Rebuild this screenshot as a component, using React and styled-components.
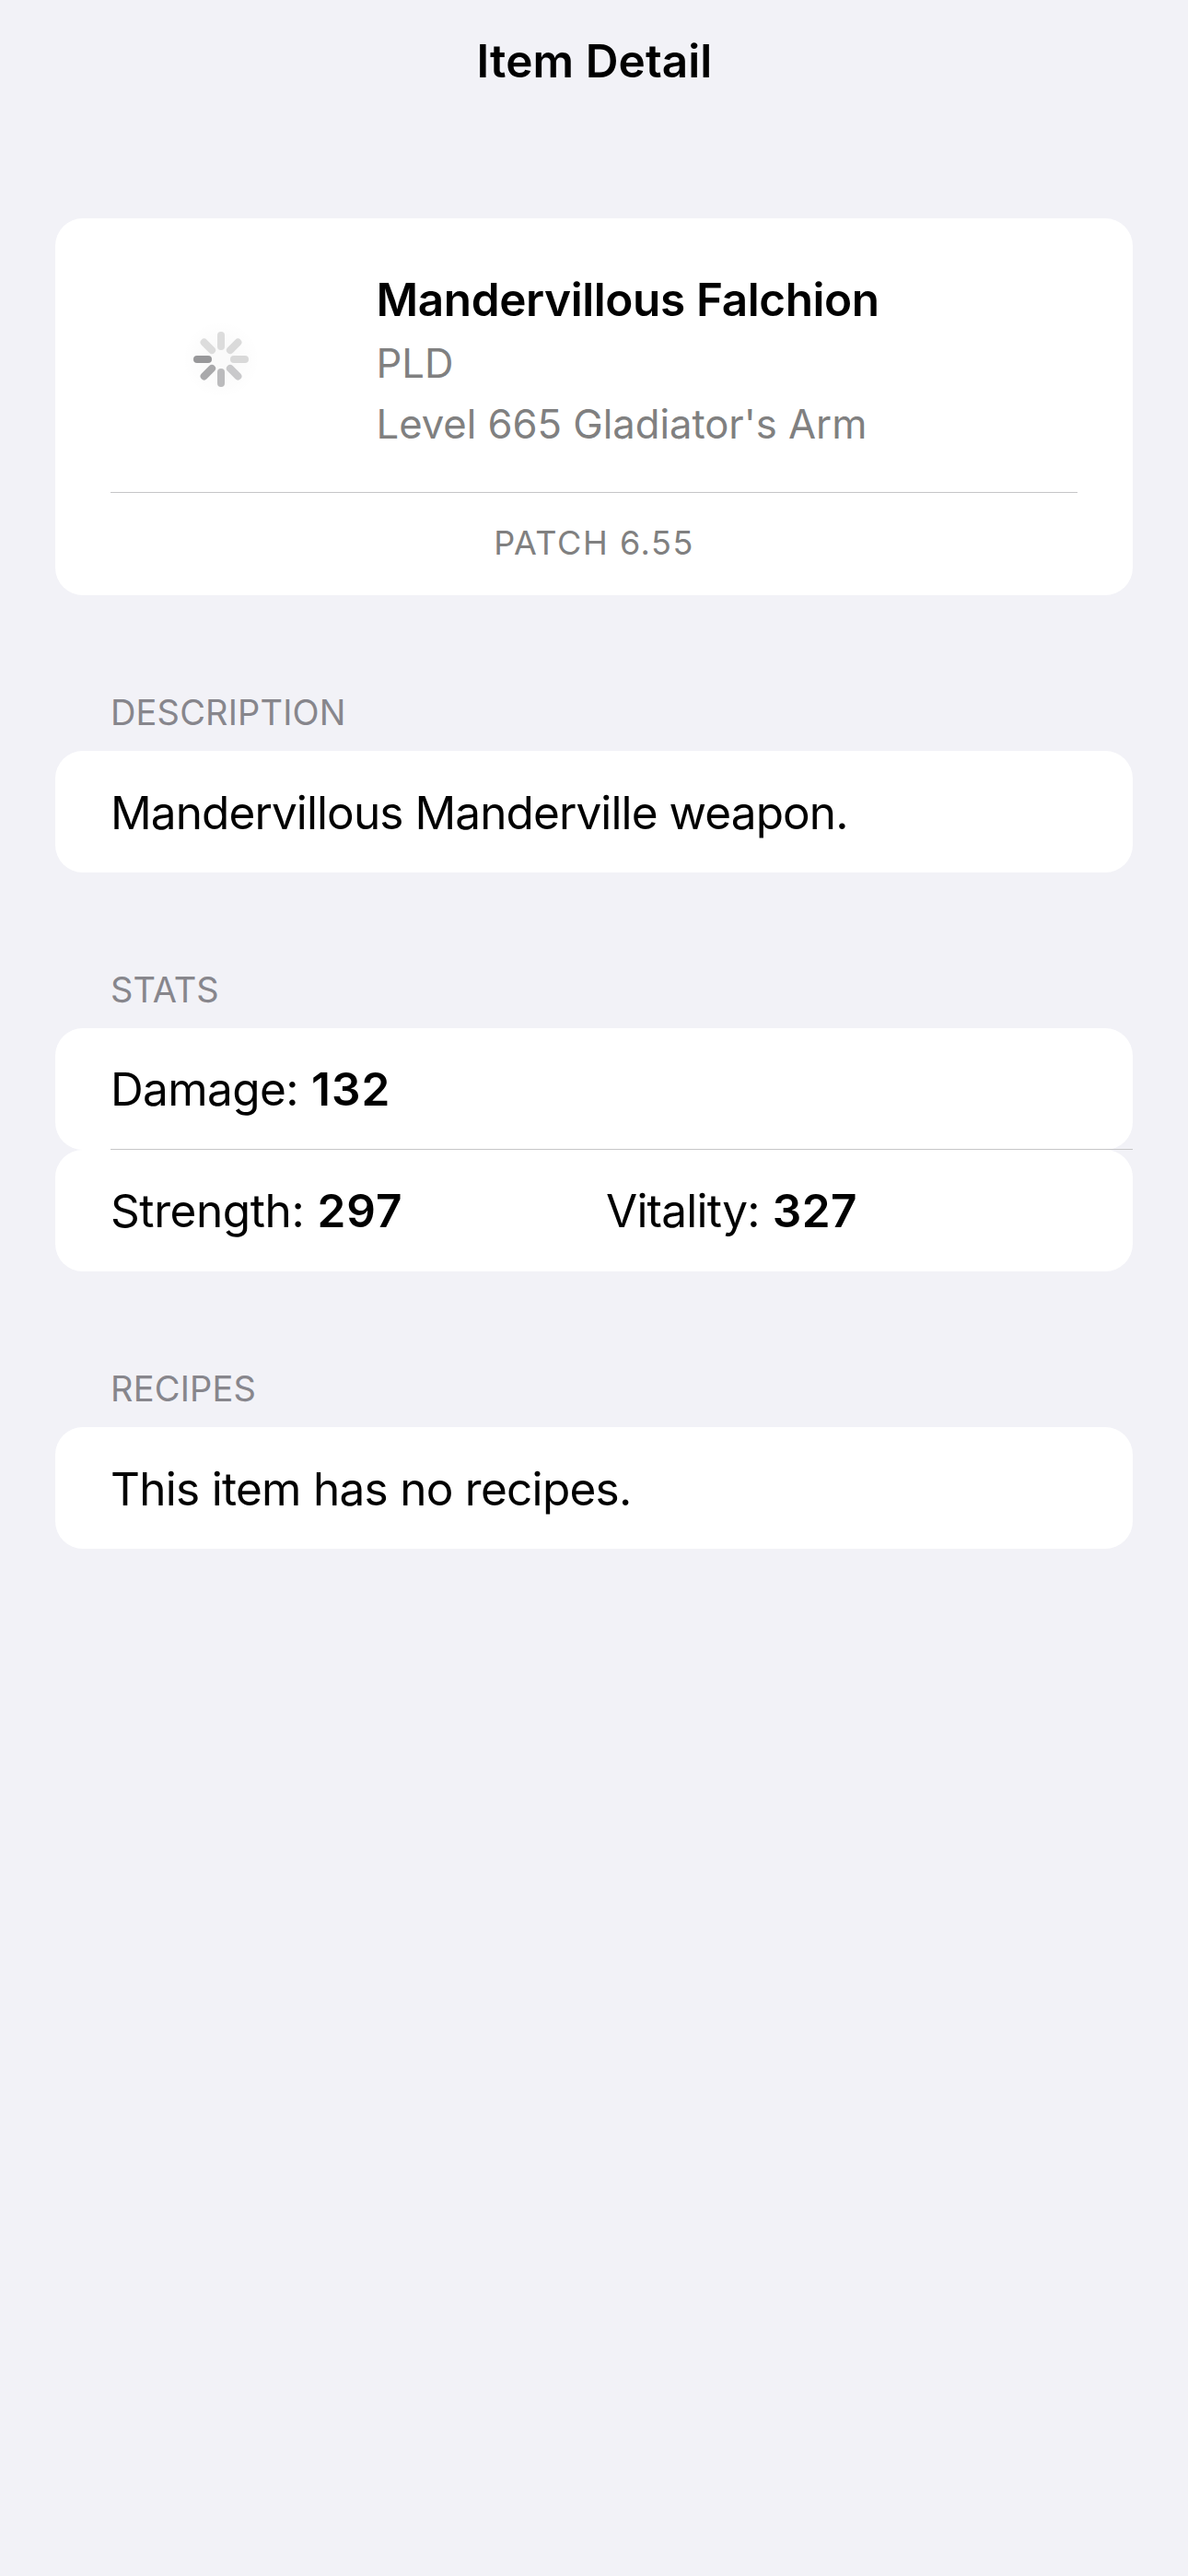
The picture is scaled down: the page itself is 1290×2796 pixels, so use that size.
import React from "react";
import styled, { createGlobalStyle } from "styled-components";

const GlobalStyle = createGlobalStyle`
  *, *::before, *::after {
    box-sizing: border-box;
  }
  html, body {
    margin: 0;
    background: #f2f2f7;
  }
  body {
    font-family: Inter, Roboto, "Liberation Sans", sans-serif;
    color: #000;
  }
`;

const Screen = styled.main`
  display: flex;
  flex-direction: column;
  width: 100%;
  min-height: 2796px;
  padding: 0 60px;
  background: #f2f2f7;
`;

const NavBar = styled.header`
  display: flex;
  align-items: center;
  justify-content: center;
  height: 132px;
  margin-bottom: 105px;
`;

const NavTitle = styled.h1`
  margin: 0;
  padding-left: 1px;
  font-size: 49.5px;
  font-weight: 600;
  line-height: 62px;
  letter-spacing: 0.09px;
`;

const Card = styled.div`
  background: #fff;
  border-radius: 30px;
`;

const Summary = styled.div`
  display: flex;
  align-items: flex-start;
  gap: 48.5px;
  height: 297px;
  padding: 0 60px;
`;

const Artwork = styled.div`
  display: flex;
  align-items: center;
  justify-content: center;
  width: 240px;
  height: 240px;
  margin-top: 33px;
`;

const SpinnerSvg = styled.svg`
  width: 100px;
  height: 100px;
`;

const Info = styled.div`
  display: flex;
  flex-direction: column;
  padding-top: 57px;
`;

const ItemName = styled.h2`
  margin: 0 0 6px;
  font-size: 49.5px;
  font-weight: 600;
  line-height: 62px;
  letter-spacing: -0.4px;
  white-space: nowrap;
`;

const Meta = styled.p`
  margin: 0;
  font-size: 43.6px;
  line-height: 66px;
  letter-spacing: -0.02px;
  color: #808080;
  white-space: nowrap;
`;

const Divider = styled.hr`
  height: 1px;
  margin: 0 60px;
  border: 0;
  background: #c6c6c8;
`;

const Patch = styled.div`
  display: flex;
  align-items: center;
  justify-content: center;
  height: 111px;
  padding: 0 0 3px;
  font-size: 36px;
  letter-spacing: 1.55px;
  color: #808080;
`;

const SectionLabel = styled.h3`
  margin: 0;
  padding: 104px 60px 19px;
  font-size: 38px;
  font-weight: 400;
  line-height: 46px;
  letter-spacing: ${({ $tracking = 0 }) => $tracking}px;
  color: #87868c;
`;

const TextRow = styled(Card)`
  display: flex;
  align-items: center;
  height: 132px;
  padding: 2px 60px 0;
  font-size: 49.5px;
  letter-spacing: ${({ $tracking }) => $tracking}px;
`;

const StatRow = styled(Card)`
  position: relative;
  display: grid;
  grid-template-columns: 1fr 1fr;
  column-gap: 26px;
  align-items: center;
  height: 132px;
  padding: 0 60px;

  &:not(:last-child)::after {
    content: "";
    position: absolute;
    right: 0;
    bottom: 0;
    left: 60px;
    height: 1px;
    background: #c6c6c8;
  }
`;

const StatItem = styled.div`
  display: flex;
  align-items: baseline;
  gap: 14px;
  font-size: 49.5px;
  line-height: 62px;
`;

const StatName = styled.span`
  letter-spacing: ${({ $tracking }) => $tracking}px;
`;

const StatValue = styled.strong`
  font-weight: 600;
  letter-spacing: ${({ $tracking }) => $tracking}px;
`;

const BLADES = [
  "#dcdcdc",
  "#dadada",
  "#d9d9d9",
  "#c9c9cb",
  "#bbbbbd",
  "#a9a9ab",
  "#98989a",
  "#dcdcdc",
];

function Spinner() {
  return (
    <SpinnerSvg viewBox="-50 -50 100 100" aria-label="Loading">
      <defs>
        <radialGradient id="halo">
          <stop offset="0.35" stopColor="#000" stopOpacity="0.02" />
          <stop offset="1" stopColor="#000" stopOpacity="0" />
        </radialGradient>
      </defs>
      <circle r="42" fill="url(#halo)" />
      {BLADES.map((color, i) => (
        <rect
          key={i}
          x="-4"
          y="-30"
          width="8"
          height="20"
          rx="4"
          fill={color}
          transform={`rotate(${i * 45})`}
        />
      ))}
    </SpinnerSvg>
  );
}

function Stat({ name, value, nameTracking, valueTracking }) {
  return (
    <StatItem>
      <StatName $tracking={nameTracking}>{name}:</StatName>
      <StatValue $tracking={valueTracking}>{value}</StatValue>
    </StatItem>
  );
}

export default function App() {
  return (
    <>
      <GlobalStyle />
      <Screen>
        <NavBar>
          <NavTitle>Item Detail</NavTitle>
        </NavBar>

        <Card>
          <Summary>
            <Artwork>
              <Spinner />
            </Artwork>
            <Info>
              <ItemName>Mandervillous Falchion</ItemName>
              <Meta>PLD</Meta>
              <Meta>Level 665 Gladiator's Arm</Meta>
            </Info>
          </Summary>
          <Divider />
          <Patch>PATCH 6.55</Patch>
        </Card>

        <section>
          <SectionLabel $tracking={0.16}>DESCRIPTION</SectionLabel>
          <TextRow $tracking={-0.9}>Mandervillous Manderville weapon.</TextRow>
        </section>

        <section>
          <SectionLabel>STATS</SectionLabel>
          <div>
            <StatRow>
              <Stat name="Damage" value="132" nameTracking={-0.6} valueTracking={1.1} />
            </StatRow>
            <StatRow>
              <Stat name="Strength" value="297" nameTracking={-0.4} valueTracking={1.1} />
              <Stat name="Vitality" value="327" nameTracking={-0.76} valueTracking={0.4} />
            </StatRow>
          </div>
        </section>

        <section>
          <SectionLabel $tracking={0.2}>RECIPES</SectionLabel>
          <TextRow $tracking={-0.72}>This item has no recipes.</TextRow>
        </section>
      </Screen>
    </>
  );
}
